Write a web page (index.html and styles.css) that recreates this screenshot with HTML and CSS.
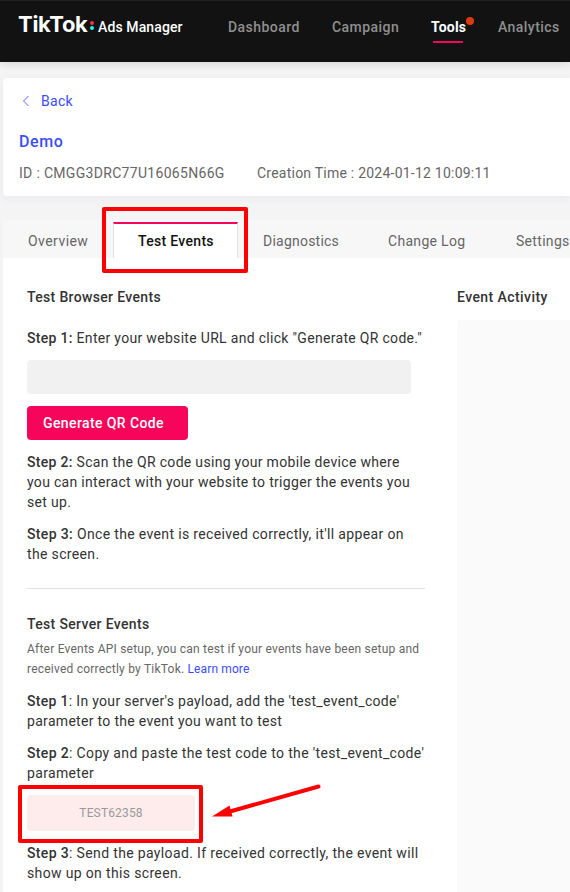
FILE: index.html
```html
<!doctype html>
<html lang="en">
<head>
    <meta charset="UTF-8">
    <meta name="viewport" content="width=device-width, initial-scale=1.0">
    <title>TikTok Ads Manager</title>
    <link rel="stylesheet" href="styles.css">
</head>
<body>
<header class="topbar">
    <div class="logo">
        <span class="brand">TikTok</span>
        <span class="dots"><i class="dot_red"></i><i class="dot_cyan"></i></span>
        <span class="product">Ads Manager</span>
    </div>
    <nav class="nav">
        <a class="nav_dashboard">Dashboard</a>
        <a class="nav_campaign">Campaign</a>
        <a class="nav_tools active">Tools<span class="badge"></span></a>
        <a class="nav_analytics">Analytics</a>
    </nav>
</header>

<section class="card">
    <a class="back">
        <svg width="8" height="12" viewBox="0 0 8 12"><path d="M6.5 1 1.5 6l5 5" fill="none" stroke="#5a68ff" stroke-width="1"/></svg>
        <span>Back</span>
    </a>
    <h1>Demo</h1>
    <div class="meta">
        <span class="meta_id">ID : CMGG3DRC77U16065N66G</span>
        <span class="meta_time">Creation Time : 2024-01-12 10:09:11</span>
    </div>
</section>

<div class="tabs">
    <a class="tab tab_overview">Overview</a>
    <a class="tab tab_test selected">Test Events<span class="mark mark_tab"></span></a>
    <a class="tab tab_diag">Diagnostics</a>
    <a class="tab tab_log">Change Log</a>
    <a class="tab tab_settings">Settings</a>
</div>

<main class="panel">
    <div class="left">
        <h2>Test Browser Events</h2>
        <p class="first"><b>Step 1:</b> Enter your website URL and click "Generate QR code."</p>
        <div class="url_input"></div>
        <button class="generate">Generate QR Code</button>
        <p><b>Step 2:</b> Scan the QR code using your mobile device where<br>
            you can interact with your website to trigger the events you<br>
            set up.</p>
        <p class="wide"><b>Step 3:</b> Once the event is received correctly, it'll appear on<br>
            the screen.</p>
        <hr>
        <h2>Test Server Events</h2>
        <p class="desc">After Events API setup, you can test if your events have been setup and<br>
            received correctly by TikTok. <a class="link">Learn more</a></p>
        <p><b>Step 1</b>: In your server's payload, add the 'test_event_code'<br>
            parameter to the event you want to test</p>
        <p class="wide"><b>Step 2</b>: Copy and paste the test code to the 'test_event_code'<br>
            parameter</p>
        <div class="code">TEST62358<span class="mark mark_code"></span>
            <svg class="arrow" width="112" height="40" viewBox="0 0 112 40">
                <path d="M108.5 4.5 20 29.5" stroke="#f00" stroke-width="4" stroke-linecap="round"/>
                <path d="M2 34.5 19.5 23.5l3 11z" fill="#f00"/>
            </svg>
        </div>
        <p class="wide"><b>Step 3</b>: Send the payload. If received correctly, the event will<br>
            show up on this screen.</p>
    </div>
    <div class="right">
        <h2>Event Activity</h2>
        <div class="activity"></div>
    </div>
</main>
</body>
</html>
```

FILE: styles.css
```css
* {
    box-sizing: border-box;
}

body {
    margin: 0;
    width: 570px;
    height: 892px;
    overflow: hidden;
    background: #f4f4f5;
    font-family: Roboto, "Liberation Sans", sans-serif;
    font-size: 14px;
    line-height: 20px;
    letter-spacing: 0.31px;
    color: #333;
    white-space: nowrap;
}

h1, h2, p {
    margin: 0;
}

b, h2 {
    font-weight: 500;
}

h2 {
    font-size: 14px;
    line-height: 20px;
    letter-spacing: 0.34px;
}

/* top bar */
.topbar {
    display: flex;
    height: 62px;
    padding-left: 18px;
    background: #121212;
    border-top: 1px solid #222;
    box-shadow: 0 2px 8px rgba(18, 0, 18, 0.12);
}

.logo {
    display: flex;
    width: 210px;
    color: #fff;
}

.brand {
    width: 71px;
    padding-top: 13px;
    font-family: Inter, sans-serif;
    font-size: 22px;
    font-weight: 700;
    letter-spacing: -0.3px;
}

.dots {
    display: flex;
    flex-direction: column;
    gap: 1px;
    width: 9px;
    padding: 20px 0 0 1px;
}

.dots i {
    width: 4px;
    height: 4px;
    border-radius: 50%;
}

.dot_red {
    background: #fe2c55;
}

.dot_cyan {
    background: #25f4ee;
}

.product {
    padding-top: 16px;
    font-weight: 500;
    letter-spacing: 0.12px;
}

.nav {
    display: flex;
    gap: 32px;
    padding-top: 16px;
    color: #8f8f8f;
    font-weight: 500;
    letter-spacing: 0.45px;
}

.nav a {
    height: 26px;
}

.nav_dashboard {
    width: 72px;
}

.nav_campaign {
    width: 67px;
}

.nav_tools {
    width: 35px;
}

.nav .active {
    position: relative;
    color: #fff;
    font-weight: 700;
    letter-spacing: 0.2px;
}

.nav .active::after {
    content: "";
    position: absolute;
    left: 2px;
    top: 24px;
    width: 30px;
    height: 2px;
    background: #f7045b;
}

.badge {
    position: absolute;
    left: 35px;
    top: 0;
    width: 8px;
    height: 8px;
    border-radius: 50%;
    background: #dd3b0b;
}

/* event source info */
.card {
    height: 118px;
    margin: 16px 0 0 3px;
    padding: 13px 0 0 16px;
    background: #fff;
    border-radius: 4px 0 0 4px;
    box-shadow: 0 2px 8px rgba(30, 30, 80, 0.06);
}

.back {
    display: flex;
    align-items: center;
    gap: 11px;
    padding-left: 3px;
    color: #3b4dfa;
}

h1 {
    margin-top: 21px;
    font-size: 16px;
    line-height: 20px;
    font-weight: 500;
    letter-spacing: 0.6px;
    color: #3b4dfa;
}

.meta {
    display: flex;
    margin-top: 11px;
    color: #666;
}

.meta_id {
    width: 238px;
}

.meta_time {
    letter-spacing: 0.23px;
}

/* tabs */
.tabs {
    display: flex;
    height: 38px;
    margin: 24px 0 0 3px;
    background: #f7f7f8;
    color: #666;
}

.tab {
    padding-top: 11px;
    flex: none;
}

.tab_overview {
    width: 110px;
    padding-left: 25px;
    letter-spacing: 0.45px;
}

.tab_diag {
    width: 125px;
    padding-left: 25px;
    letter-spacing: 0.23px;
}

.tab_log {
    width: 127px;
    padding-left: 25px;
}

.tab_settings {
    padding-left: 26px;
}

.selected {
    position: relative;
    width: 125px;
    height: 36px;
    margin-top: 2px;
    padding: 7px 0 0 24px;
    background: #fff;
    border: 1px solid #e3e3e3;
    border-top: 2px solid #f7045b;
    border-bottom: 0;
    color: #121212;
    font-weight: 500;
}

.mark {
    position: absolute;
    border: 4px solid #f00;
    border-radius: 2px;
}

.mark_tab {
    left: -12.5px;
    top: -17px;
    width: 146px;
    height: 66px;
}

/* main panel */
.panel {
    display: flex;
    height: 634px;
    margin-left: 3px;
    padding: 29px 0 0 24px;
    background: #fff;
}

.left {
    width: 398px;
    margin-right: 32px;
}

.left p {
    margin-bottom: 12px;
}

.left .first {
    margin-top: 21px;
}

.left .wide {
    letter-spacing: 0.35px;
}

.url_input {
    width: 384px;
    height: 34px;
    background: #f1f1f1;
    border-radius: 4px;
}

.generate {
    display: block;
    width: 161px;
    height: 34px;
    margin: 12px 0;
    padding: 0 0 0 16px;
    background: #f7045b;
    border: 0;
    border-radius: 4px;
    color: #fff;
    font: 500 14px/34px Roboto, sans-serif;
    letter-spacing: 0.4px;
    text-align: left;
}

hr {
    height: 1px;
    margin: 24px 0 25px;
    border: 0;
    background: #e1e1e1;
}

.left .desc {
    margin: 5px 0 12px;
    font-size: 12px;
    letter-spacing: 0.22px;
    color: #666;
}

.link {
    color: #3b4dfa;
    letter-spacing: 0.12px;
}

.code {
    position: relative;
    width: 168px;
    height: 36px;
    margin-bottom: 12px;
    background: #feeced;
    border-radius: 4px;
    color: #999;
    font-size: 12px;
    line-height: 36px;
    letter-spacing: 0.15px;
    text-align: center;
}

.mark_code {
    left: -9.5px;
    top: -10px;
    width: 185px;
    height: 58px;
}

.arrow {
    position: absolute;
    left: 183px;
    top: -13px;
}

.right {
    width: 113px;
}

.right h2 {
    letter-spacing: 0.42px;
}

.activity {
    height: 580px;
    margin-top: 13px;
    background: #fafafa;
    border-radius: 4px 0 0 0;
}
```
